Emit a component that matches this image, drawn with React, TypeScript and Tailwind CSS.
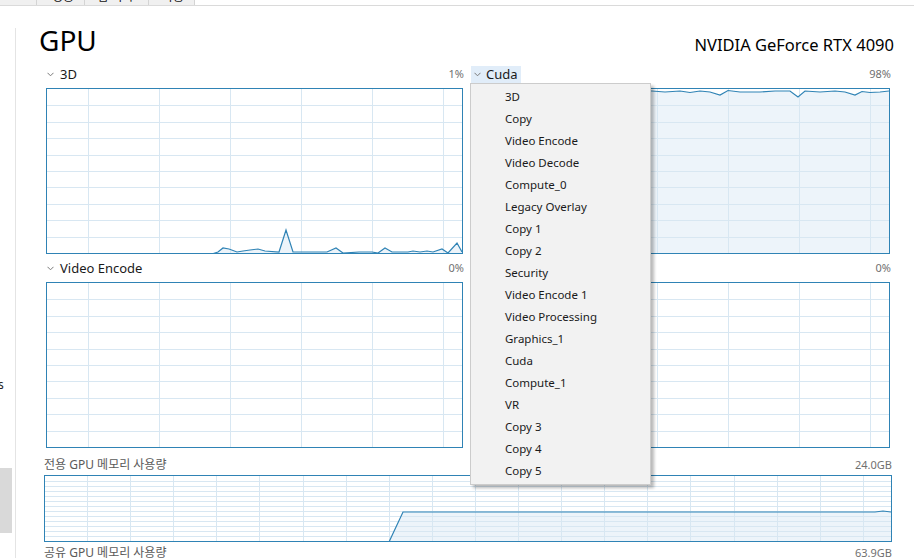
import React from 'react';

type P = [number, number];

const menuItems = [
  '3D',
  'Copy',
  'Video Encode',
  'Video Decode',
  'Compute_0',
  'Legacy Overlay',
  'Copy 1',
  'Copy 2',
  'Security',
  'Video Encode 1',
  'Video Processing',
  'Graphics_1',
  'Cuda',
  'Compute_1',
  'VR',
  'Copy 3',
  'Copy 4',
  'Copy 5',
];

// chart-local coordinates (inside the 1px border)
const threeD: P[] = [
  [0, 165], [165, 165], [171, 163], [176, 159], [182, 160], [190, 163], [196, 162], [203, 161], [211, 160],
  [218, 162], [232, 163], [239, 141], [246, 163], [260, 163], [280, 163], [289, 159], [296, 164],
  [312, 163], [325, 163], [331, 164], [338, 159], [345, 163], [361, 163], [366, 162], [373, 163],
  [380, 162], [386, 163], [395, 160], [401, 164], [410, 154], [415, 163],
];

const cuda: P[] = [
  [0, 3], [12, 2], [25, 3], [40, 2], [55, 4], [70, 2], [85, 3], [100, 2], [115, 3], [130, 2],
  [145, 5], [160, 2], [178, 2], [191, 3], [206, 2], [216, 3.5], [226, 2], [236, 3], [246, 6],
  [254, 1.5], [266, 3], [286, 3], [301, 2], [316, 2], [324, 8], [331, 2], [346, 3], [361, 2],
  [371, 3], [381, 6], [388, 2.5], [396, 3.5], [406, 3], [415, 2],
];

const dedicated: P[] = [
  [0, 66], [344, 66], [358, 36], [600, 36], [830, 36], [838, 35], [846, 36],
];

function Chevron() {
  return (
    <svg width="7" height="5" viewBox="0 0 7 5" className="shrink-0">
      <path d="M0.5 0.8 L3.5 3.8 L6.5 0.8" fill="none" stroke="#7a7a7a" strokeWidth="1" />
    </svg>
  );
}

function Graph({
  w,
  h,
  firstCol,
  colStep,
  rows,
  points,
}: {
  w: number;
  h: number;
  firstCol: number;
  colStep: number;
  rows: number;
  points?: P[];
}) {
  const cols: number[] = [];
  for (let x = firstCol; x < w; x += colStep) cols.push(Math.round(x) + 0.5);
  const hs: number[] = [];
  for (let i = 1; i < rows; i++) hs.push(Math.round((h * i) / rows) + 0.5);
  const d = points ? points.map((p) => p.join(',')).join(' ') : '';
  return (
    <svg width={w} height={h} className="block">
      {points && (
        <polygon
          points={`${points[0][0]},${h} ${d} ${points[points.length - 1][0]},${h}`}
          fill="#edf4fa"
        />
      )}
      {hs.map((y) => (
        <line key={'h' + y} x1={0} x2={w} y1={y} y2={y} stroke="#d8e7f2" strokeWidth={1} />
      ))}
      {cols.map((x) => (
        <line key={'v' + x} x1={x} x2={x} y1={0} y2={h} stroke="#d8e7f2" strokeWidth={1} />
      ))}
      {points && <polyline points={d} fill="none" stroke="#2f83b5" strokeWidth={1.2} />}
    </svg>
  );
}

function Label({ name, value }: { name: string; value: string }) {
  return (
    <div className="h-[20px] shrink-0 flex items-center justify-between">
      <div className="flex items-center gap-[6px] ml-[1px]">
        <Chevron />
        <span className="text-[13px] leading-[20px] text-[#1a1a1a]">{name}</span>
      </div>
      <span className="text-[11px] leading-[20px] text-[#707070] -mr-[1px]">{value}</span>
    </div>
  );
}

function Tabs() {
  const tabs = [
    { w: 'w-[37px]', pl: 'pl-[22px]', t: '스' },
    { w: 'w-[48px]', pl: 'pl-[15px]', t: '성능' },
    { w: 'w-[64px]', pl: 'pl-[12px]', t: '앱 기록' },
    { w: 'w-[46px]', pl: 'pl-[13px]', t: '사용' },
  ];
  return (
    <div className="h-[6px] shrink-0 border-b border-[#dadada] flex">
      {tabs.map((tab) => (
        <div
          key={tab.t}
          className={`${tab.w} ${tab.pl} h-[5px] bg-[#f0f0f0] border-r border-[#d4d4d4] overflow-hidden flex items-end`}
        >
          <span className="text-[12px] leading-[12px] mb-[2px] whitespace-nowrap text-[#111]">{tab.t}</span>
        </div>
      ))}
    </div>
  );
}

export default function App() {
  return (
    <div className="w-[914px] h-[558px] overflow-hidden bg-white flex flex-col font-['Noto_Sans','Noto_Sans_CJK_KR',sans-serif]">
      <Tabs />
      <div className="flex flex-1 min-h-0">
        {/* sidebar */}
        <div className="w-[16px] shrink-0 mt-[22px] border-r border-[#e4e4e4] flex flex-col overflow-hidden">
          <div className="mt-[349px] h-[16px] shrink-0 -ml-[2px] text-[12px] leading-[16px] text-[#222]">s</div>
          <div className="mt-[75px] w-[12px] h-[65px] shrink-0 bg-[#d9d9d9]" />
        </div>

        {/* main */}
        <div className="flex-1 pl-[28px] pr-[22px] flex flex-col">
          <div className="h-[58px] shrink-0 pt-[16px] -ml-[5px] -mr-[2px] flex items-baseline justify-between">
            <span className="text-[28px] leading-[36px] text-black">GPU</span>
            <span className="text-[16.5px] leading-[20px] text-black">NVIDIA GeForce RTX 4090</span>
          </div>

          <div className="mx-[2px] shrink-0 grid grid-cols-2 gap-x-[10px]">
            {/* row 1 */}
            <div className="flex flex-col">
              <Label name="3D" value="1%" />
              <div className="mt-[4px] h-[166px] shrink-0 border border-[#2f83b5]">
                <Graph w={415} h={164} firstCol={41} colStep={70.9} rows={10} points={threeD} />
              </div>
            </div>
            <div className="flex flex-col">
              <div className="h-[20px] shrink-0 flex justify-between">
                <div className="relative self-start mt-[2px] -ml-[2px]">
                  <div className="h-[17px] pl-[3px] pr-[3px] flex items-center gap-[5px] bg-[#e1edf9]">
                    <Chevron />
                    <span className="text-[13px] leading-[17px] text-[#1a1a1a]">Cuda</span>
                  </div>
                  <div className="absolute top-full -left-[1px] z-10 w-[181px] bg-[#f2f2f2] border border-[#cccccc] py-[2px] shadow-[3px_3px_3px_rgba(0,0,0,0.28)]">
                    {menuItems.map((item) => (
                      <div key={item} className="h-[22px] pl-[34px] flex items-center text-[11.5px] text-[#1a1a1a] whitespace-nowrap">
                        {item}
                      </div>
                    ))}
                  </div>
                </div>
                <span className="text-[11px] leading-[20px] text-[#707070] -mr-[1px]">98%</span>
              </div>
              <div className="mt-[4px] h-[166px] shrink-0 border border-[#2f83b5]">
                <Graph w={415} h={164} firstCol={41} colStep={70.9} rows={10} points={cuda} />
              </div>
            </div>

            {/* row 2 */}
            <div className="flex flex-col mt-[4px]">
              <Label name="Video Encode" value="0%" />
              <div className="mt-[4px] h-[166px] shrink-0 border border-[#2f83b5]">
                <Graph w={415} h={164} firstCol={41} colStep={70.9} rows={10} />
              </div>
            </div>
            <div className="flex flex-col mt-[4px]">
              <Label name="Video Decode" value="0%" />
              <div className="mt-[4px] h-[166px] shrink-0 border border-[#2f83b5]">
                <Graph w={415} h={164} firstCol={41} colStep={70.9} rows={10} />
              </div>
            </div>
          </div>

          {/* memory */}
          <div className="mt-[7px] h-[20px] shrink-0 flex items-center justify-between">
            <span className="text-[12px] leading-[20px] text-[#5a5a5a]">전용 GPU 메모리 사용량</span>
            <span className="text-[11px] leading-[20px] text-[#707070]">24.0GB</span>
          </div>
          <div className="h-[67px] shrink-0 border border-[#2f83b5]">
            <Graph w={846} h={65} firstCol={42} colStep={43.1} rows={13} points={dedicated} />
          </div>
          <div className="mt-[1px] h-[20px] shrink-0 flex items-center justify-between">
            <span className="text-[12px] leading-[20px] text-[#5a5a5a]">공유 GPU 메모리 사용량</span>
            <span className="text-[11px] leading-[20px] text-[#707070]">63.9GB</span>
          </div>
        </div>
      </div>
    </div>
  );
}
